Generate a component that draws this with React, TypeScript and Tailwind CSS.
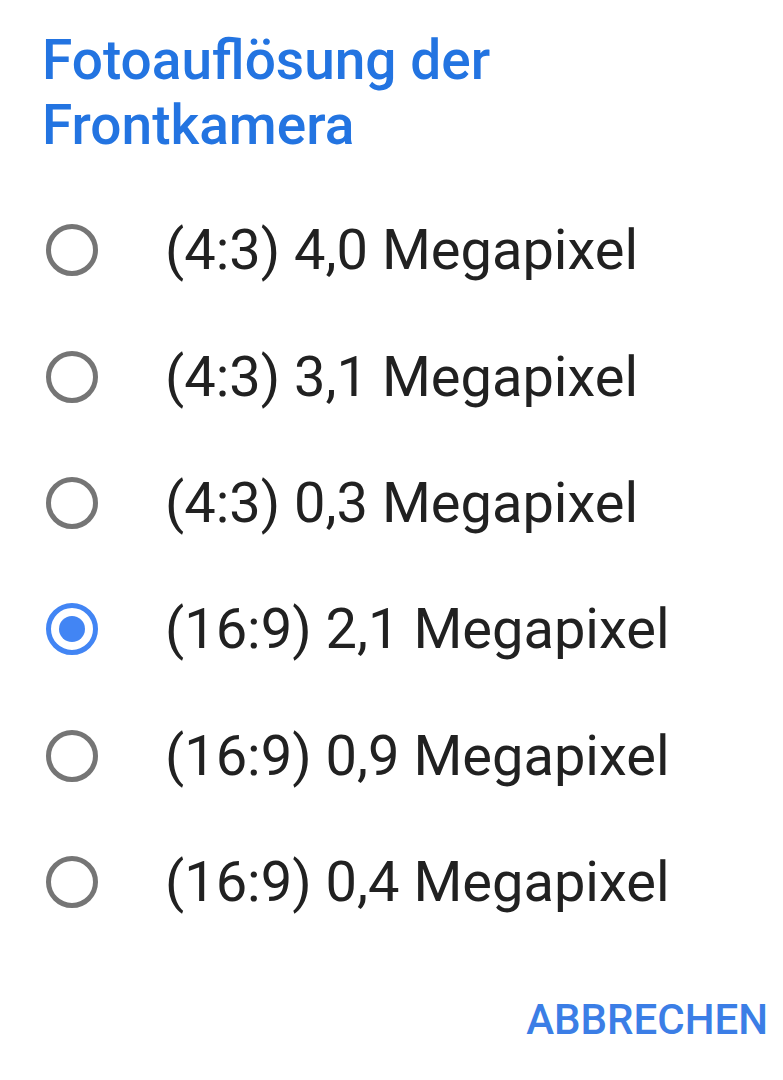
const options = [
  { label: "(4:3) 4,0 Megapixel", selected: false },
  { label: "(4:3) 3,1 Megapixel", selected: false },
  { label: "(4:3) 0,3 Megapixel", selected: false },
  { label: "(16:9) 2,1 Megapixel", selected: true },
  { label: "(16:9) 0,9 Megapixel", selected: false },
  { label: "(16:9) 0,4 Megapixel", selected: false },
];

function Radio({ checked }: { checked: boolean }) {
  if (checked) {
    return (
      <span className="flex h-[52px] w-[52px] shrink-0 items-center justify-center rounded-full border-[5px] border-[#4285f4]">
        <span className="h-[26px] w-[26px] rounded-full bg-[#4285f4]" />
      </span>
    );
  }
  return <span className="h-[52px] w-[52px] shrink-0 rounded-full border-[5px] border-[#757575]" />;
}

export default function App() {
  return (
    <main className="min-h-screen w-[783px] bg-white font-['Roboto',sans-serif]">
      <h1 className="pl-[42px] pt-[28px] text-[55px] font-medium leading-[65px] text-[#2374e1]">
        Fotoauflösung der
        <br />
        Frontkamera
      </h1>

      <ul className="mt-[29px] flex flex-col">
        {options.map((o) => (
          <li key={o.label} className="flex h-[126.4px] items-center pl-[46px]">
            <Radio checked={o.selected} />
            <span className="ml-[67px] text-[56px] leading-none text-[#212121]">{o.label}</span>
          </li>
        ))}
      </ul>

      <div className="flex justify-end pr-[15px] pt-[54px]">
        <button className="text-[42px] font-medium leading-none text-[#3b7ee6]">ABBRECHEN</button>
      </div>
    </main>
  );
}
